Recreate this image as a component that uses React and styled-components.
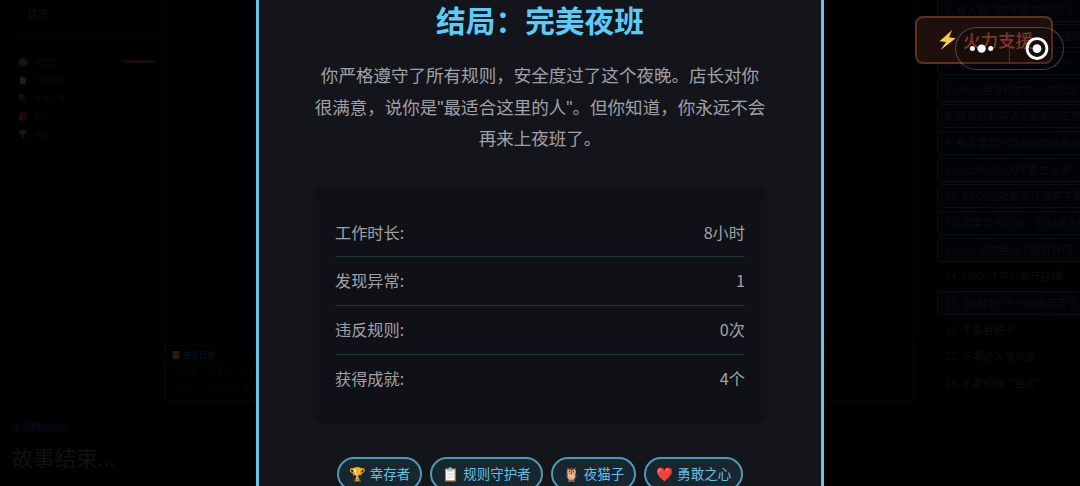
import React from 'react';
import styled, { createGlobalStyle } from 'styled-components';

const stats = [
  { label: '工作时长:', value: '8小时' },
  { label: '发现异常:', value: '1' },
  { label: '违反规则:', value: '0次' },
  { label: '获得成就:', value: '4个' },
];

const achievements = [
  { icon: '🏆', label: '幸存者' },
  { icon: '📋', label: '规则守护者' },
  { icon: '🦉', label: '夜猫子' },
  { icon: '❤️', label: '勇敢之心' },
];

const menu = [
  { icon: '😨', label: '理智值', bar: true },
  { icon: '📋', label: '已知规则' },
  { icon: '🔍', label: '发现异常' },
  { icon: '🎒', label: '物品' },
  { icon: '🏆', label: '成就' },
];

const rules = [
  { text: '4. 有人敲门时不要立刻开门', active: true },
  { text: '5. 监控里出现的人影不要理会', active: true },
  { text: '6. 冷藏柜的门必须一直关好', active: true },
  { text: '7. 00:00后穿红衣的人的东西不能卖', active: true },
  { text: '8. 收银台的电话不能超过三声', active: true },
  { text: '9. 有人要买不存在的商品就说卖完了', active: true },
  { text: '10. 02:00-03:00不要去仓库', active: true },
  { text: '11. 03:00后听到婴儿哭声不要回应', active: true },
  { text: '12. 如果灯光闪烁，立刻闭上眼', active: true },
  { text: '13. 05:30前绝对不能打开门', active: true },
  { text: '14. 06:00才可以离开店铺' },
  { text: '15. 交班时对下一班说辛苦了', active: true },
  { text: '16. 不要看镜子' },
  { text: '17. 不要进入储物室' },
  { text: '18. 不要相信“店长”' },
];

const App = () => {
  return (
    <>
      <GlobalStyle />
      <Page>
        <Game>
          <Main>
            <Sidebar>
              <SidebarTitle>状态</SidebarTitle>
              {menu.map((item) => (
                <MenuItem key={item.label}>
                  <span>{item.icon}</span>
                  <MenuLabel>{item.label}</MenuLabel>
                  {item.bar && <Meter />}
                </MenuItem>
              ))}
            </Sidebar>
            <Scene>
              <Log>
                <LogTitle>
                  <span>📒</span> 夜班日志:
                </LogTitle>
                <LogLine>06:00 · 天亮了，你安全度过了夜晚</LogLine>
                <LogLine>06:00 · 获得成就: 幸存者</LogLine>
              </Log>
            </Scene>
            <Rules>
              {rules.map((rule) => (
                <Rule key={rule.text} $active={rule.active}>
                  {rule.text}
                </Rule>
              ))}
            </Rules>
          </Main>
          <Story>
            <StoryLabel>夜班便利店日志：</StoryLabel>
            <StoryText>故事结束...</StoryText>
          </Story>
        </Game>

        <Modal>
          <Title>结局：完美夜班</Title>
          <Description>
            你严格遵守了所有规则，安全度过了这个夜晚。店长对你
            <br />
            很满意，说你是"最适合这里的人"。但你知道，你永远不会
            <br />
            再来上夜班了。
          </Description>
          <Stats>
            {stats.map((stat) => (
              <StatRow key={stat.label}>
                <span>{stat.label}</span>
                <span>{stat.value}</span>
              </StatRow>
            ))}
          </Stats>
          <Badges>
            {achievements.map((item) => (
              <Badge key={item.label}>
                <BadgeIcon>{item.icon}</BadgeIcon>
                {item.label}
              </Badge>
            ))}
          </Badges>
        </Modal>

        <SupportButton>
          <Bolt viewBox="0 0 18 22">
            <defs>
              <linearGradient id="bolt" x1="0" y1="0" x2="0" y2="1">
                <stop offset="0" stopColor="#f5bd35" />
                <stop offset="1" stopColor="#ffd65e" />
              </linearGradient>
            </defs>
            <path
              d="M13.6 1 1 12.2l6.6.9L2 21 17.2 9.2l-6.6-.9z"
              fill="url(#bolt)"
            />
          </Bolt>
          火力支援
        </SupportButton>
        <Capsule>
          <svg width="109" height="43" viewBox="0 0 109 43">
            <g fill="#fff">
              <circle cx="17.4" cy="21.6" r="2.5" />
              <circle cx="26.6" cy="21.6" r="4.2" />
              <circle cx="35.7" cy="21.6" r="2.5" />
              <circle cx="82" cy="21.6" r="4.4" />
            </g>
            <path d="M54.3 6.5v30" stroke="#3c3a3a" />
            <circle
              cx="82"
              cy="21.6"
              r="9.9"
              fill="none"
              stroke="#fff"
              strokeWidth="2.8"
            />
          </svg>
        </Capsule>
      </Page>
    </>
  );
};

const GlobalStyle = createGlobalStyle`
  * {
    box-sizing: border-box;
  }
  body {
    margin: 0;
    background: #000;
    overflow: hidden;
    font-family: "Noto Sans CJK SC", sans-serif;
  }
`;

const Page = styled.div`
  position: relative;
  width: 1080px;
  height: 486px;
  overflow: hidden;
`;

//dimmed game screen behind the ending dialog
const Game = styled.div`
  display: flex;
  flex-direction: column;
  height: 100%;
  background: #000001;
  color: #0a0b0c;
  white-space: nowrap;
`;

const Main = styled.div`
  display: flex;
  flex: none;
  height: 404px;
  padding-left: 12px;
`;

const Sidebar = styled.div`
  width: 153px;
  border-left: 1px solid #020404;
  border-right: 1px solid #020606;
  border-bottom: 1px solid #030505;
  font-size: 8px;
`;

const SidebarTitle = styled.div`
  height: 40px;
  margin-bottom: 12px;
  padding: 5px 14px;
  border-bottom: 1px solid #040707;
  font-size: 11px;
  line-height: 16px;
  color: #101113;
`;

const MenuItem = styled.div`
  display: flex;
  align-items: center;
  gap: 6px;
  height: 18px;
  padding: 0 8px 0 5px;

  span:first-child {
    opacity: 0.12;
  }
`;

const MenuLabel = styled.span`
  flex: 1;
`;

const Meter = styled.div`
  width: 34px;
  height: 3px;
  border-radius: 2px;
  background: linear-gradient(90deg, #140504, #181104, #051008);
`;

const Scene = styled.div`
  display: flex;
  flex-direction: column;
  justify-content: flex-end;
  width: 750px;
  background: #000103;
  border-right: 1px solid #030606;
`;

const Log = styled.div`
  height: 56px;
  margin-bottom: 3px;
  border: 1px solid #040606;
  background: #000;
  font-size: 8px;
`;

const LogTitle = styled.div`
  height: 18px;
  padding-left: 5px;
  border-bottom: 1px solid #040606;
  line-height: 18px;
  color: #051a24;

  span {
    opacity: 0.15;
  }
`;

const LogLine = styled.div`
  padding-left: 10px;
  line-height: 17px;
  color: #08090a;
`;

const Rules = styled.div`
  display: flex;
  flex-direction: column;
  gap: 2.7px;
  flex: 1;
  margin-left: 16px;
  padding-left: 5px;
  border-left: 1px solid #020404;
  overflow: hidden;
`;

const Rule = styled.div`
  flex: none;
  height: 24px;
  padding-left: 7px;
  border: 1px solid ${(props) => (props.$active ? '#041217' : 'transparent')};
  border-right: 0;
  border-radius: 4px 0 0 4px;
  background: ${(props) => (props.$active ? '#010306' : 'transparent')};
  font-size: 10.5px;
  line-height: 22px;
  color: #0c0e10;

  &:first-child {
    margin-top: -2.5px;
  }
`;

const Story = styled.div`
  flex: 1;
  padding: 15px 12px 0;
`;

const StoryLabel = styled.div`
  font-size: 8px;
  line-height: 15px;
  color: #03151c;
`;

const StoryText = styled.div`
  margin-top: 7px;
  font-size: 21.3px;
  line-height: 32px;
  color: #0f1214;
`;

const Modal = styled.div`
  position: absolute;
  top: -60px;
  left: 256px;
  width: 568px;
  height: 620px;
  padding: 54px 55px 0;
  border: 3px solid #67c5ed;
  background: #14151b;
  color: #a0a1a6;
`;

const Title = styled.h2`
  margin: 0;
  font-size: 29.7px;
  line-height: 45px;
  font-weight: 700;
  text-align: center;
  color: #5bcbfa;
`;

const Description = styled.p`
  margin: 19px -10px 0;
  font-family: "Liberation Sans", "Noto Sans CJK SC", sans-serif;
  font-size: 17.55px;
  line-height: 31.5px;
  text-align: center;
  white-space: nowrap;
`;

const Stats = styled.div`
  margin: 31.5px -1px 33px;
  padding: 21.5px 22px 20.5px;
  border-radius: 10px;
  background: #101117;
`;

const StatRow = styled.div`
  display: flex;
  justify-content: space-between;
  height: 48.75px;
  border-bottom: 1px solid #1e3540;
  font-size: 16.2px;
  line-height: 46.5px;

  &:last-child {
    border-bottom: 0;
  }
`;

const Badges = styled.div`
  display: flex;
  justify-content: center;
  gap: 8px;
`;

const Badge = styled.div`
  display: flex;
  align-items: center;
  gap: 4px;
  height: 34px;
  padding: 0 10px 2px;
  border: 2px solid #4d9ab5;
  border-radius: 17px;
  background: #182630;
  font-size: 13.5px;
  line-height: 20px;
  color: #63bfe3;
  white-space: nowrap;
`;

const BadgeIcon = styled.span`
  width: 17px;
  text-align: center;
`;

const SupportButton = styled.div`
  position: absolute;
  top: 16px;
  left: 915px;
  display: flex;
  align-items: center;
  gap: 6px;
  width: 138px;
  height: 48px;
  padding: 0 0 1px 21px;
  border: 2px solid #60301f;
  border-radius: 8px;
  background: #1e100d;
  font-size: 17.5px;
  font-weight: 500;
  color: #9a412b;
`;

const Bolt = styled.svg`
  width: 19px;
  height: 22px;
`;

const Capsule = styled.div`
  position: absolute;
  top: 27px;
  left: 955px;
  width: 109px;
  height: 43px;

  &::before {
    content: '';
    position: absolute;
    inset: 0;
    border: 1.5px solid rgba(255, 255, 255, 0.24);
    border-radius: 22px;
    background: rgba(0, 0, 0, 0.15);
  }

  svg {
    display: block;
    position: relative;
  }
`;

export default App;
